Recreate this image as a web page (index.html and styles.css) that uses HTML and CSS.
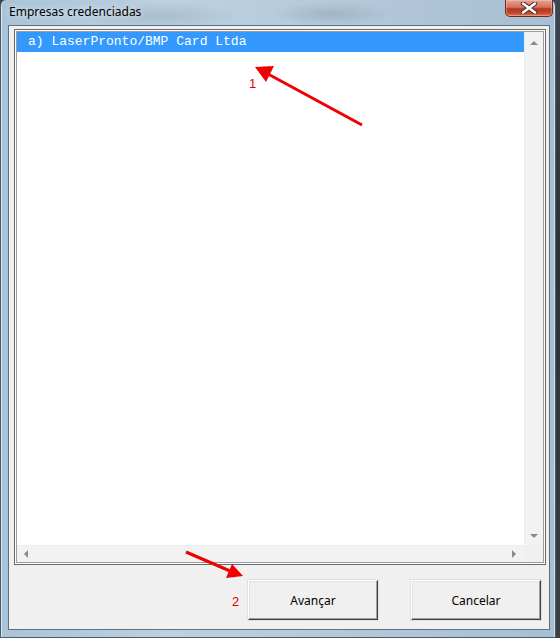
FILE: index.html
```html
<!DOCTYPE html>
<html lang="pt">
<head>
<meta charset="utf-8">
<title>Empresas credenciadas</title>
<link rel="stylesheet" href="styles.css">
</head>
<body>
<div class="window">
  <div class="titlebar">
    <span class="title">Empresas credenciadas</span>
    <div class="close">
      <svg width="20" height="12" viewBox="0 0 20 12"><path d="M4 1.5 L16 10.5 M16 1.5 L4 10.5" stroke="#4a2a24" stroke-width="4.5" stroke-linecap="round"/><path d="M4 1.5 L16 10.5 M16 1.5 L4 10.5" stroke="#ffffff" stroke-width="2.6" stroke-linecap="round"/></svg>
    </div>
  </div>
  <div class="client">
    <div class="listbox">
      <div class="listinner">
        <div class="items">
          <div class="item selected">a) LaserPronto/BMP Card Ltda</div>
        </div>
        <div class="vscroll">
          <span class="arr up"></span>
          <span class="arr down"></span>
        </div>
        <div class="hscroll">
          <span class="arr left"></span>
          <span class="arr right"></span>
        </div>
        <div class="corner"></div>
      </div>
    </div>
    <div class="buttons">
      <button class="btn">Avançar</button>
      <button class="btn">Cancelar</button>
    </div>
  </div>
</div>
<svg class="annot" width="560" height="638" viewBox="0 0 560 638">
  <line x1="362" y1="125" x2="268" y2="74" stroke="#f00000" stroke-width="3"/>
  <polygon points="255,67 274,66 266,82" fill="#f00000"/>
  <text x="249" y="88" class="num">1</text>
  <line x1="186" y1="552" x2="230" y2="571" stroke="#f00000" stroke-width="3"/>
  <polygon points="243,576 226,578 232,564" fill="#f00000"/>
  <text x="232" y="606" class="num">2</text>
</svg>
</body>
</html>
```
FILE: styles.css
```css
html, body {
  margin: 0;
  padding: 0;
}
body {
  width: 560px;
  height: 638px;
  background: linear-gradient(180deg, #3c4650 0%, #2a3139 40%, #3a4048 100%);
  position: relative;
  overflow: hidden;
  font-family: "Segoe UI", "Noto Sans", "Liberation Sans", sans-serif;
}
.window {
  width: 556px;
  height: 638px;
  box-sizing: border-box;
  display: flex;
  flex-direction: column;
  padding: 0 5px 7px 7px;
  border-radius: 6px 6px 0 0;
  border: 1px solid #4c5a68;
  border-top: none;
  background:
    radial-gradient(ellipse 80px 14px at 160px 16px, rgba(150,170,185,0.5), transparent),
    radial-gradient(ellipse 60px 12px at 330px 14px, rgba(140,160,178,0.5), transparent),
    linear-gradient(90deg, #a9c3d8 0%, #bcd1e1 30%, #b4c9da 60%, #a7bfd2 100%);
  box-shadow: inset 1px 0 0 rgba(255,255,255,0.6), inset -1px 0 0 rgba(255,255,255,0.5);
}
.titlebar {
  height: 25px;
  flex: none;
  display: flex;
  align-items: flex-start;
  justify-content: space-between;
  position: relative;
}
.title {
  font-size: 12px;
  color: #000;
  line-height: 14px;
  padding-top: 5px;
  padding-left: 1px;
  text-shadow: 0 0 6px rgba(255,255,255,0.9);
}
.close {
  width: 48px;
  height: 17px;
  box-sizing: border-box;
  margin-right: -3px;
  border: 1px solid #6e2c22;
  border-top: none;
  border-radius: 0 0 5px 5px;
  background: linear-gradient(180deg, #e7a291 0%, #d0735f 45%, #b8361f 55%, #c6452c 80%, #d9785c 100%);
  display: flex;
  align-items: center;
  justify-content: center;
  box-shadow: inset 0 0 0 1px rgba(255,220,210,0.35);
}
.close svg { display: block; }
.client {
  flex: 1;
  background: #f0f0f0;
  border: 1px solid #62707c;
  display: flex;
  flex-direction: column;
  padding: 3px 3px 0 5px;
}
.listbox {
  height: 536px;
  box-sizing: border-box;
  border: 1px solid #6a6a6a;
  padding: 1px;
  background: #fdfdfd;
}
.listinner {
  height: 100%;
  box-sizing: border-box;
  border: 1px solid #9c9c9c;
  display: grid;
  grid-template-columns: 1fr 19px;
  grid-template-rows: 1fr 17px;
  background: #fff;
}
.items {
  padding-top: 0;
  overflow: hidden;
}
.item {
  font-family: "Liberation Mono", "Courier New", monospace;
  font-size: 13px;
  height: 20px;
  line-height: 20px;
  padding-left: 11px;
  color: #000;
  white-space: pre;
}
.item.selected {
  background: #3399ff;
  color: #fff;
}
.vscroll {
  background: #f2f2f2;
  border-left: 1px solid #ececec;
  display: flex;
  flex-direction: column;
  justify-content: space-between;
  align-items: center;
  padding: 9px 0 7px;
}
.hscroll {
  background: #f2f2f2;
  border-top: 1px solid #ececec;
  display: flex;
  justify-content: space-between;
  align-items: center;
  padding: 0 8px 0 7px;
}
.corner {
  background: #f0f0f0;
}
.arr {
  width: 0;
  height: 0;
  display: block;
}
.arr.up {
  border-left: 4px solid transparent;
  border-right: 4px solid transparent;
  border-bottom: 4px solid #8a8a8a;
}
.arr.down {
  border-left: 4px solid transparent;
  border-right: 4px solid transparent;
  border-top: 4px solid #8a8a8a;
}
.arr.left {
  border-top: 4px solid transparent;
  border-bottom: 4px solid transparent;
  border-right: 4px solid #8a8a8a;
}
.arr.right {
  border-top: 4px solid transparent;
  border-bottom: 4px solid transparent;
  border-left: 4px solid #8a8a8a;
}
.buttons {
  display: flex;
  justify-content: flex-end;
  gap: 33px;
  margin-top: 15px;
  padding-right: 5px;
}
.btn {
  width: 130px;
  height: 40px;
  box-sizing: border-box;
  font-family: "Segoe UI", "Noto Sans", "Liberation Sans", sans-serif;
  font-size: 12px;
  color: #000;
  background: #f0f0f0;
  border: 1px solid;
  border-color: #ffffff #404040 #404040 #ffffff;
  box-shadow: inset -1px -1px 0 #a0a0a0, inset 1px 1px 0 #e3e3e3;
  padding: 0;
  outline: 1px solid #e0e0e0;
}
.annot {
  position: absolute;
  left: 0;
  top: 0;
  pointer-events: none;
}
.num {
  font-family: "Liberation Sans", Arial, sans-serif;
  font-size: 13px;
  fill: #e00000;
}
```
